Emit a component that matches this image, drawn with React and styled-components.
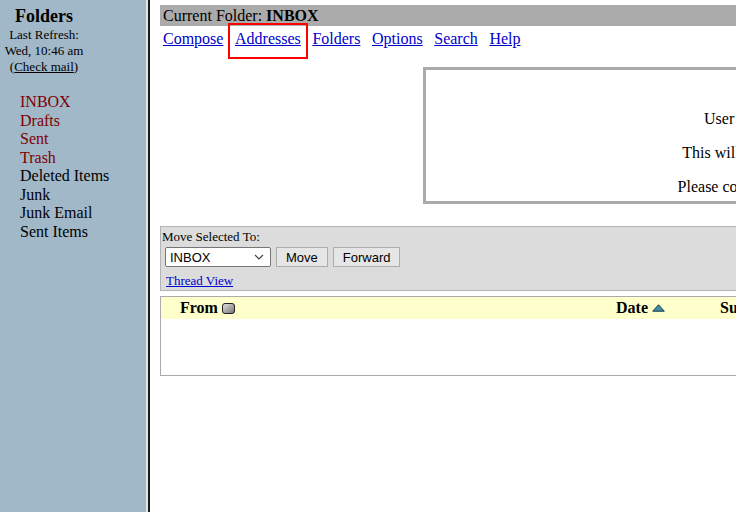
import styled, { createGlobalStyle } from "styled-components";

const Global = createGlobalStyle`
  html, body {
    margin: 0;
    padding: 0;
    height: 100%;
    background: #fff;
  }
  body {
    font-family: "Liberation Serif", "Times New Roman", serif;
    font-size: 16px;
    color: #000;
  }
`;

const Frames = styled.div`
  display: flex;
  height: 100vh;
  overflow: hidden;
`;

const LeftFrame = styled.div`
  width: 146px;
  flex: none;
  background: #a1b8c9;
`;

const FrameBorder = styled.div`
  width: 2px;
  flex: none;
  border-left: 2px solid #e4e4e4;
  background: #1c1c1c;
`;

const RightFrame = styled.div`
  flex: 1;
  overflow: hidden;
  padding: 5px 0 0 10px;
`;

const Page = styled.div`
  width: 900px;
`;

const LeftHead = styled.div`
  width: 88px;
  padding-top: 6px;
  text-align: center;
`;

const Title = styled.div`
  font-size: 18px;
  font-weight: bold;
  line-height: 21px;
`;

const Small = styled.div`
  font-size: 13px;
  line-height: 16px;
`;

const PlainLink = styled.a`
  color: #000;
  text-decoration: underline;
`;

const FolderList = styled.div`
  margin-top: 18px;
  padding-left: 20px;
  display: flex;
  flex-direction: column;
`;

const Folder = styled.a`
  font-size: 16px;
  line-height: 18.5px;
  color: ${(p) => (p.$special ? "#800000" : "#000")};
  text-decoration: none;
`;

const FolderBar = styled.div`
  height: 21px;
  line-height: 21px;
  background: #ababab;
  padding-left: 3px;
  b {
    font-weight: bold;
  }
`;

const NavRow = styled.div`
  display: flex;
  gap: 11.6px;
  padding: 4px 0 0 3px;
  height: 22px;
  line-height: 18px;
`;

const NavLink = styled.a`
  color: #0000cc;
  text-decoration: underline;
  outline: ${(p) => (p.$marked ? "2px solid #f00" : "none")};
  outline-offset: 5px;
`;

const Notice = styled.div`
  margin: 15px 0 0 263px;
  width: 760px;
  border: 3px solid #ababab;
  padding: 40px 0 5px;
  display: flex;
  flex-direction: column;
  align-items: center;
  gap: 16px;
  line-height: 18px;
`;

const MoveBar = styled.div`
  margin-top: 22px;
  background: #dcdcdc;
  border: 1px solid #b4b4b4;
  padding: 2px 2px 0 1px;
  height: 61px;
`;

const Label = styled.div`
  font-size: 13px;
  line-height: 15px;
`;

const Controls = styled.div`
  display: flex;
  gap: 5px;
  margin: 3px 0 0 3px;
`;

const Select = styled.div`
  width: 106px;
  height: 20px;
  box-sizing: border-box;
  border: 1px solid #767676;
  border-radius: 2px;
  background: #fff;
  display: flex;
  align-items: center;
  justify-content: space-between;
  padding: 0 6px 0 4px;
  font-family: "Liberation Sans", Arial, sans-serif;
  font-size: 13px;
`;

const Button = styled.div`
  height: 20px;
  box-sizing: border-box;
  padding: 0 ${(p) => p.$pad}px;
  border: 1px solid #adadad;
  background: #e6e6e6;
  display: flex;
  align-items: center;
  font-family: "Liberation Sans", Arial, sans-serif;
  font-size: 13px;
`;

const SmallLink = styled.a`
  display: block;
  margin: 6px 0 0 4px;
  font-size: 13px;
  line-height: 15px;
  color: #0000cc;
  text-decoration: underline;
`;

const MessageTable = styled.div`
  margin-top: 5px;
  border: 1px solid #ababab;
  height: 78px;
`;

const HeaderRow = styled.div`
  display: grid;
  grid-template-columns: 19px 436px 104px 1fr;
  height: 22px;
  align-items: center;
  background: #ffffcc;
`;

const HeadCell = styled.div`
  display: flex;
  align-items: center;
  gap: 4px;
  font-weight: bold;
  font-size: 16px;
`;

const SortBox = () => (
  <svg width="13" height="11" viewBox="0 0 13 11">
    <defs>
      <linearGradient id="sg" x1="0" y1="0" x2="1" y2="1">
        <stop offset="0" stopColor="#e8e8e8" />
        <stop offset="1" stopColor="#6e6e6e" />
      </linearGradient>
    </defs>
    <rect x="0.5" y="0.5" width="12" height="10" rx="2.5" fill="url(#sg)" stroke="#222" />
  </svg>
);

const SortUp = () => (
  <svg width="13" height="8" viewBox="0 0 13 8">
    <path d="M6.5 0.8 L12.3 7.2 L0.7 7.2 Z" fill="#3f8fa8" stroke="#153848" strokeWidth="1" />
  </svg>
);

const Chevron = () => (
  <svg width="10" height="6" viewBox="0 0 10 6">
    <path d="M1 1 L5 5 L9 1" fill="none" stroke="#444" strokeWidth="1.2" />
  </svg>
);

const folders = [
  ["INBOX", true],
  ["Drafts", true],
  ["Sent", true],
  ["Trash", true],
  ["Deleted Items", false],
  ["Junk", false],
  ["Junk Email", false],
  ["Sent Items", false],
];

const nav = ["Compose", "Addresses", "Folders", "Options", "Search", "Help"];

function App() {
  return (
    <>
      <Global />
      <Frames>
        <LeftFrame>
          <LeftHead>
            <Title>Folders</Title>
            <Small>Last Refresh:</Small>
            <Small>Wed, 10:46 am</Small>
            <Small>
              (<PlainLink href="#">Check mail</PlainLink>)
            </Small>
          </LeftHead>
          <FolderList>
            {folders.map(([name, special]) => (
              <Folder key={name} href="#" $special={special}>
                {name}
              </Folder>
            ))}
          </FolderList>
        </LeftFrame>
        <FrameBorder />
        <RightFrame>
          <Page>
            <FolderBar>
              Current Folder: <b>INBOX</b>
            </FolderBar>
            <NavRow>
              {nav.map((n) => (
                <NavLink key={n} href="#" $marked={n === "Addresses"}>
                  {n}
                </NavLink>
              ))}
            </NavRow>
            <Notice>
              <div>User mailbox maintenance alert</div>
              <div>This will take place on Saturday night.</div>
              <div>Please contact help desk with questions.</div>
            </Notice>
            <MoveBar>
              <Label>Move Selected To:</Label>
              <Controls>
                <Select>
                  INBOX <Chevron />
                </Select>
                <Button $pad={9}>Move</Button>
                <Button $pad={9}>Forward</Button>
              </Controls>
              <SmallLink href="#">Thread View</SmallLink>
            </MoveBar>
            <MessageTable>
              <HeaderRow>
                <span />
                <HeadCell>
                  From <SortBox />
                </HeadCell>
                <HeadCell>
                  Date <SortUp />
                </HeadCell>
                <HeadCell>Subject</HeadCell>
              </HeaderRow>
            </MessageTable>
          </Page>
        </RightFrame>
      </Frames>
    </>
  );
}

export default App;
